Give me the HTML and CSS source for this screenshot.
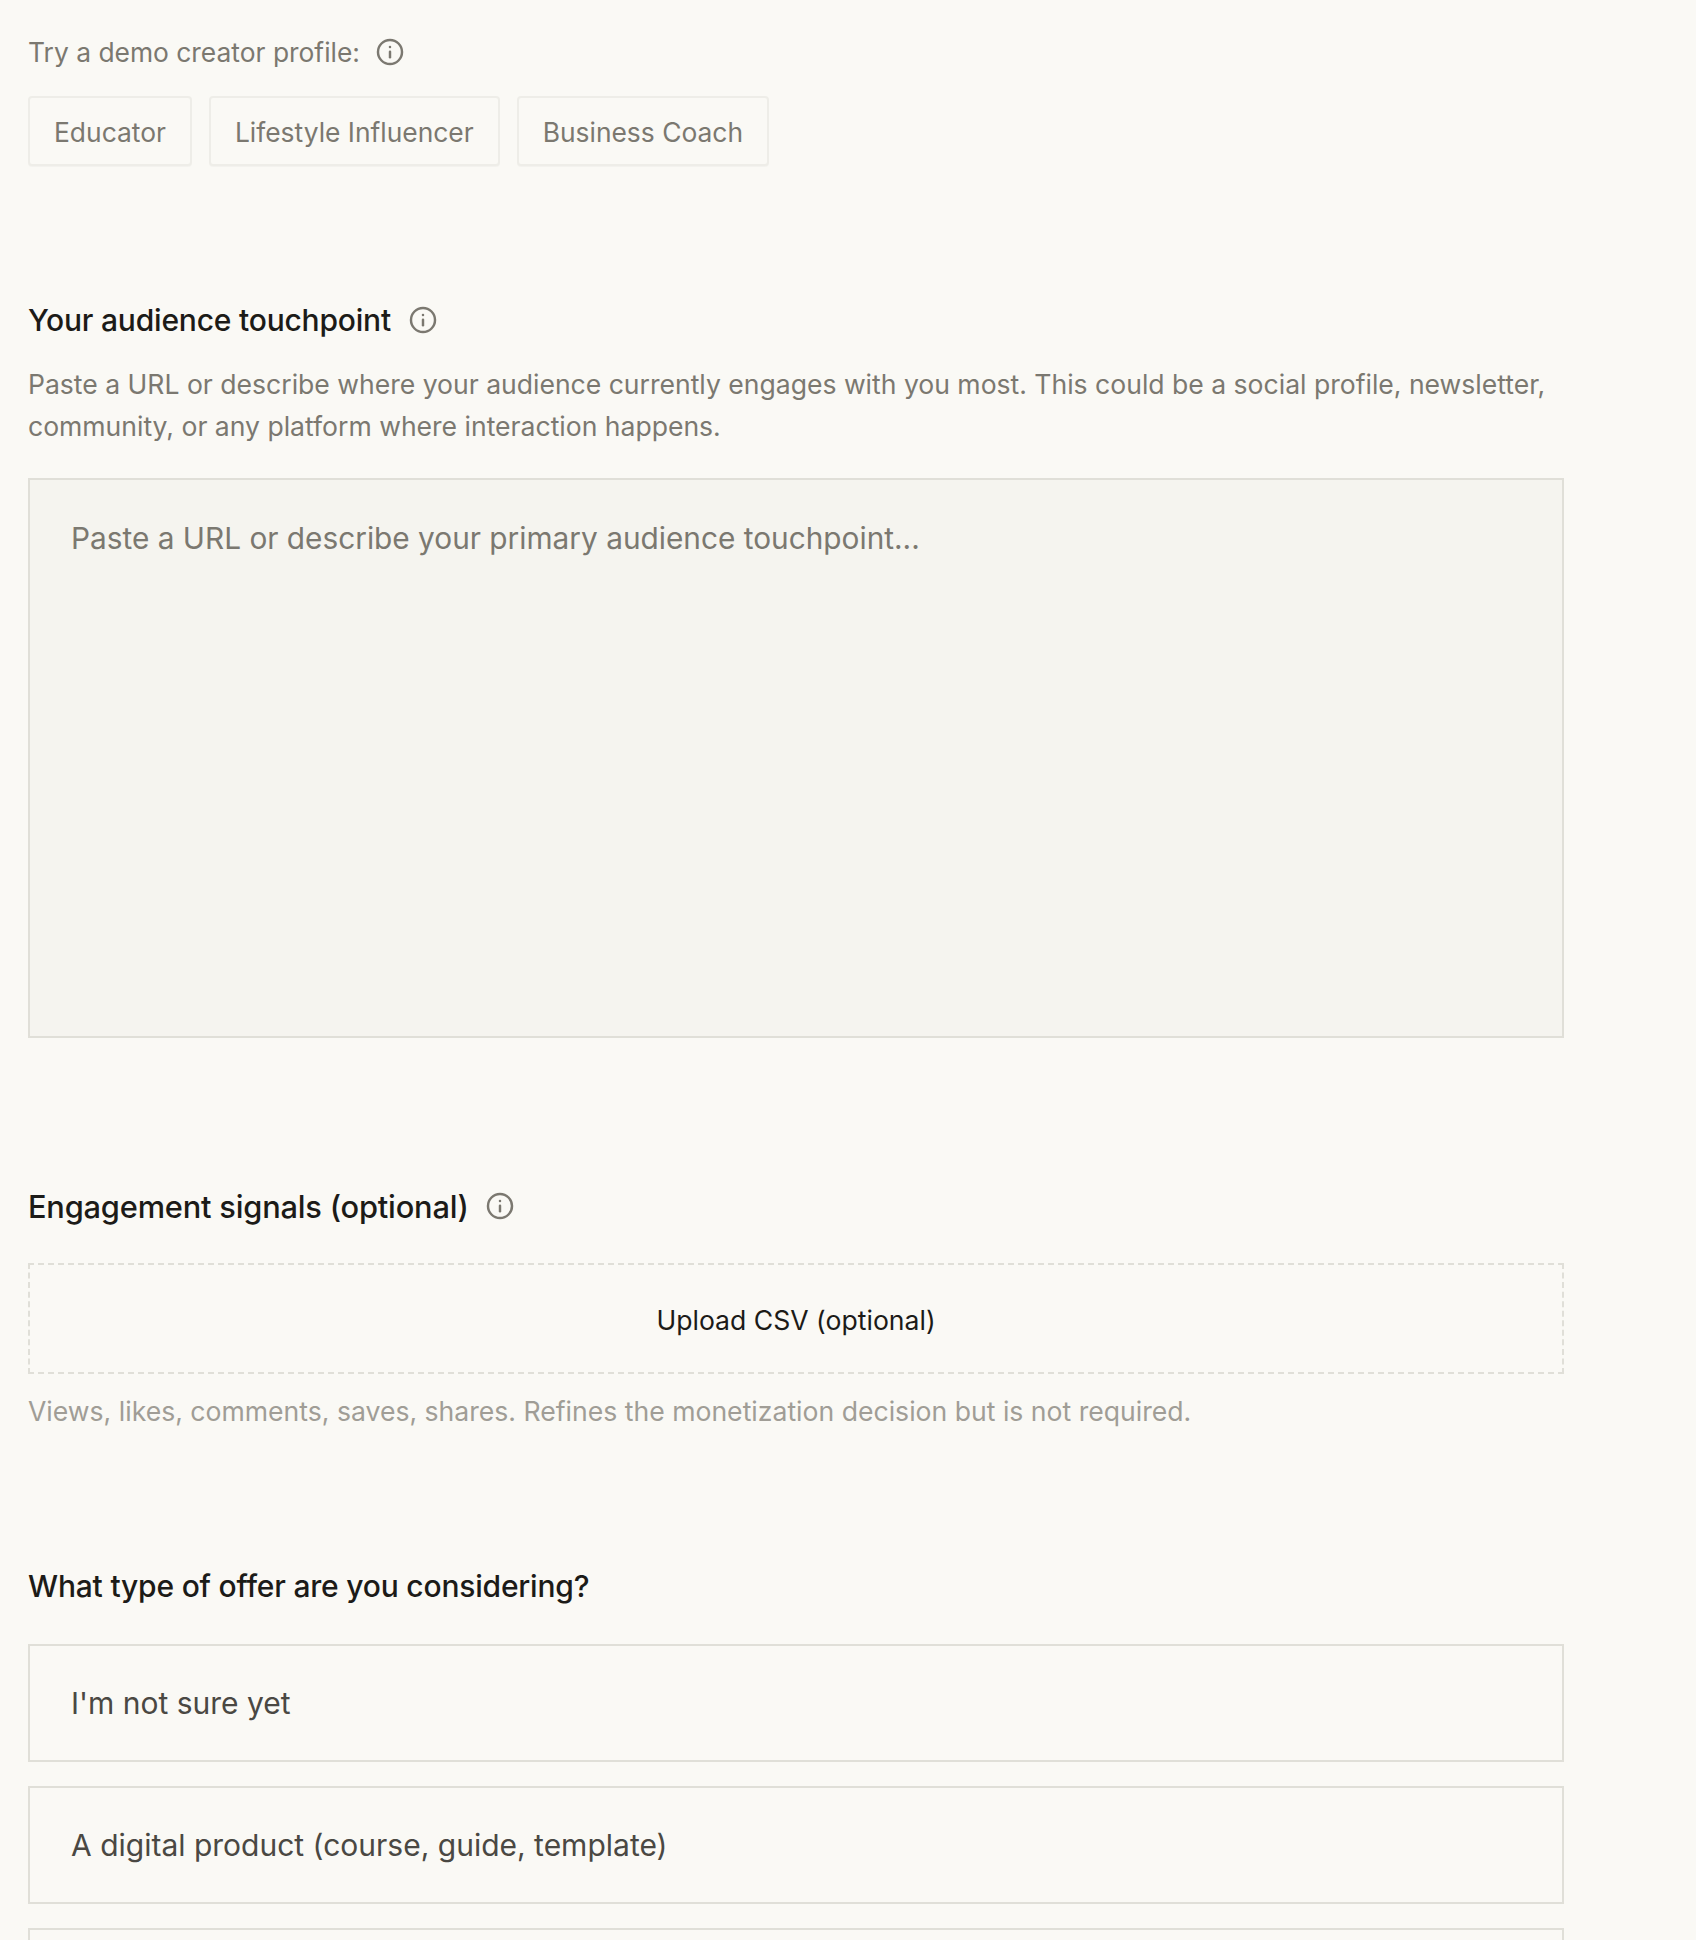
FILE: index.html
```html
<!DOCTYPE html>
<html lang="en">
<head>
<meta charset="utf-8">
<title>Creator profile</title>
<link rel="stylesheet" href="styles.css">
</head>
<body>
<main class="form">
  <section class="demo">
    <div class="demo-label">
      <span>Try a demo creator profile:</span>
      <svg class="info" viewBox="0 0 24 24" fill="none" stroke="currentColor" stroke-width="2.1" stroke-linecap="round"><circle cx="12" cy="12" r="10.3"/><path d="M12 16.5v-4.8"/><path d="M12 7.6v.2"/></svg>
    </div>
    <div class="chips">
      <button class="chip">Educator</button>
      <button class="chip">Lifestyle Influencer</button>
      <button class="chip">Business Coach</button>
    </div>
  </section>

  <section class="touchpoint">
    <h2 class="heading">
      <span>Your audience touchpoint</span>
      <svg class="info" viewBox="0 0 24 24" fill="none" stroke="currentColor" stroke-width="2.1" stroke-linecap="round"><circle cx="12" cy="12" r="10.3"/><path d="M12 16.5v-4.8"/><path d="M12 7.6v.2"/></svg>
    </h2>
    <p class="desc">Paste a URL or describe where your audience currently engages with you most. This could be a social profile, newsletter, community, or any platform where interaction happens.</p>
    <div class="textarea">Paste a URL or describe your primary audience touchpoint...</div>
  </section>

  <section class="signals">
    <h2 class="heading heading-large">
      <span>Engagement signals (optional)</span>
      <svg class="info" viewBox="0 0 24 24" fill="none" stroke="currentColor" stroke-width="2.1" stroke-linecap="round"><circle cx="12" cy="12" r="10.3"/><path d="M12 16.5v-4.8"/><path d="M12 7.6v.2"/></svg>
    </h2>
    <div class="upload">Upload CSV (optional)</div>
    <p class="note">Views, likes, comments, saves, shares. Refines the monetization decision but is not required.</p>
  </section>

  <section class="offer">
    <h2 class="heading">What type of offer are you considering?</h2>
    <div class="options">
      <div class="option">I'm not sure yet</div>
      <div class="option">A digital product (course, guide, template)</div>
      <div class="option"></div>
    </div>
  </section>
</main>
</body>
</html>
```

FILE: styles.css
```css
* { box-sizing: border-box; }
html, body { margin: 0; height: 1940px; overflow: hidden; }
body { background: #faf9f5; font-family: Inter, "Noto Sans", sans-serif; color: #1c1b18; }
.form { width: 1564px; padding: 36px 0 0 28px; }
.demo-label { display: flex; align-items: center; gap: 16px; height: 32px; font-size: 26.4px; color: #7b7870; }
.info { width: 28px; height: 28px; color: #7b7870; flex: none; }
.chips { display: flex; gap: 17px; margin-top: 28px; }
.chip { height: 70px; padding: 2px 24px 0; background: #faf9f5; border: 2px solid #eeede8; border-radius: 4px; box-shadow: 0 1px 1px rgba(0, 0, 0, 0.03); font: inherit; font-size: 26.4px; color: #7b7870; }
.touchpoint { margin-top: 134px; }
.heading { display: flex; align-items: center; gap: 18px; height: 40px; margin: 0; font-size: 30px; font-weight: 500; letter-spacing: -0.2px; color: #1c1b18; }
.heading-large { font-size: 30.8px; gap: 17px; }
.desc { margin: 23px 0 0; font-size: 26.55px; line-height: 42px; color: #7b7870; }
.textarea { height: 560px; margin-top: 31px; padding: 38px 41px; background: #f5f4ef; border: 2px solid #e0dfd8; font-size: 29.8px; line-height: 40px; color: #7b7870; }
.signals { margin-top: 148px; }
.upload { display: flex; align-items: center; justify-content: center; height: 111px; margin-top: 37px; padding-top: 2px; border: 2px dashed #e0dfd8; font-size: 26.6px; color: #1c1b18; }
.note { margin: 19px 0 0; font-size: 26.6px; line-height: 36px; color: #a09d96; }
.offer { margin-top: 137px; }
.options { display: flex; flex-direction: column; gap: 24px; margin-top: 38px; }
.option { height: 118px; display: flex; align-items: center; padding: 0 41px; border: 2px solid #e0dfd8; font-size: 30px; color: #4a4843; }
```
